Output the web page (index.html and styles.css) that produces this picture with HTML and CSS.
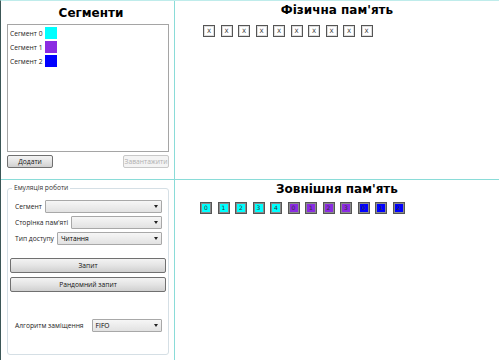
FILE: index.html
```html
<!DOCTYPE html>
<html lang="uk">
<head>
    <meta charset="UTF-8">
    <title>Сегментно-сторінкова пам'ять</title>
    <link rel="stylesheet" href="styles.css">
</head>
<body>
    <div class="window">
        <div class="cell segments">
            <h2 class="title">Сегменти</h2>
            <div class="listbox">
                <div class="seg-item"><span>Сегмент 0</span><i class="swatch cyan"></i></div>
                <div class="seg-item"><span>Сегмент 1</span><i class="swatch violet"></i></div>
                <div class="seg-item"><span>Сегмент 2</span><i class="swatch blue"></i></div>
            </div>
            <div class="seg-buttons">
                <button class="btn small">Додати</button>
                <button class="btn small" disabled>Завантажити</button>
            </div>
        </div>

        <div class="cell physical">
            <h2 class="title">Фізична пам'ять</h2>
            <div class="frames top-frames">
                <div class="frame">X</div>
                <div class="frame">X</div>
                <div class="frame">X</div>
                <div class="frame">X</div>
                <div class="frame">X</div>
                <div class="frame">X</div>
                <div class="frame">X</div>
                <div class="frame">X</div>
                <div class="frame">X</div>
                <div class="frame">X</div>
            </div>
        </div>

        <div class="cell emulation">
            <fieldset class="group">
                <legend>Емуляція роботи</legend>
                <div class="field"><label>Сегмент</label><div class="combo"></div></div>
                <div class="field"><label>Сторінка пам'яті</label><div class="combo"></div></div>
                <div class="field"><label>Тип доступу</label><div class="combo">Читання</div></div>
                <div class="actions">
                    <button class="btn wide">Запит</button>
                    <button class="btn wide">Рандомний запит</button>
                </div>
                <div class="field algo"><label>Алгоритм заміщення</label><div class="combo">FIFO</div></div>
            </fieldset>
        </div>

        <div class="cell external">
            <h2 class="title">Зовнішня пам'ять</h2>
            <div class="frames bottom-frames">
                <div class="frame cyan">0</div>
                <div class="frame cyan">1</div>
                <div class="frame cyan">2</div>
                <div class="frame cyan">3</div>
                <div class="frame cyan">4</div>
                <div class="frame violet">0</div>
                <div class="frame violet">1</div>
                <div class="frame violet">2</div>
                <div class="frame violet">3</div>
                <div class="frame blue">0</div>
                <div class="frame blue">1</div>
                <div class="frame blue">2</div>
            </div>
        </div>
    </div>
</body>
</html>
```

FILE: styles.css
```css
body {
    margin: 0;
    background: white;
    font-family: "Open Sans", "Noto Sans", sans-serif;
    font-size: 6.7px;
    color: #222;
}
.window {
    display: grid;
    grid-template-columns: 173px 1fr;
    grid-template-rows: 178px 1fr;
    gap: 1px;
    height: 359px;
    background: #8adcd8;
    border-left: 1px solid #3c5656;
    border-top: 1px solid #bfeceb;
}
.cell {
    background: white;
    min-width: 0;
}
.title {
    margin: 0;
    font-family: "DejaVu Sans", Verdana, sans-serif;
    font-weight: bold;
    font-size: 12px;
    color: #000;
    text-align: center;
    line-height: 18px;
}

/* segments */
.segments {
    padding: 3px 5px 0 6px;
}
.segments .title {
    padding-left: 6px;
}
.listbox {
    height: 124px;
    margin-top: 2px;
    border: 1px solid #a5a5a5;
    padding: 1px 2px;
}
.seg-item {
    display: flex;
    align-items: center;
    gap: 3px;
    height: 14px;
}
.swatch {
    width: 12px;
    height: 12px;
}
.cyan { background: #00ffff; }
.violet { background: #8a2be2; }
.blue { background: #0000ff; }

.seg-buttons {
    display: flex;
    justify-content: space-between;
    margin-top: 3px;
}
.btn {
    font-family: inherit;
    font-size: 6.7px;
    color: #111;
    height: 13px;
    padding: 0;
    border: 1px solid #707070;
    border-radius: 2px;
    background: linear-gradient(#f3f3f3, #e4e4e4 50%, #d0d0d0);
    line-height: 11px;
}
.btn.small {
    width: 46px;
}
.btn:disabled {
    color: #b0b0b0;
    border-color: #c8c8c8;
    background: #f4f4f4;
}

/* emulation */
.emulation {
    padding: 3px 5px 0 6px;
}
.group {
    margin: 0;
    height: 172px;
    border: 1px solid #d5dfe5;
    border-radius: 3px;
    padding: 0 6px 0 6px;
    box-sizing: border-box;
}
.group legend {
    padding: 0 2px;
    margin-left: -2px;
    color: #333;
    line-height: 10px;
}
.field {
    display: flex;
    align-items: center;
    gap: 2px;
    height: 13px;
    margin-top: 3px;
    padding-left: 1px;
}
.field:first-of-type {
    margin-top: 7px;
}
.field label {
    white-space: nowrap;
    margin-right: 1px;
}
.combo {
    flex: 1;
    position: relative;
    height: 11px;
    border: 1px solid #a8a8a8;
    border-radius: 1px;
    background: linear-gradient(#f6f6f6, #e2e2e2);
    padding-left: 3px;
    line-height: 11px;
    color: #000;
}
.combo::after {
    content: "";
    position: absolute;
    right: 3px;
    top: 4px;
    border-left: 2px solid transparent;
    border-right: 2px solid transparent;
    border-top: 3px solid #222;
}
.actions {
    display: flex;
    flex-direction: column;
    gap: 4px;
    margin: 13px -4px 0 -4px;
}
.btn.wide {
    width: 100%;
    height: 15px;
}
.algo {
    margin-top: 27px;
}
.algo label {
    margin-right: 6px;
}

/* memory */
.frames {
    display: flex;
    gap: 5.5px;
}
.top-frames {
    margin: 6px 0 0 28px;
}
.bottom-frames {
    margin: 4px 0 0 25px;
}
.frame {
    width: 10px;
    height: 10px;
    border: 1px solid #555;
    box-shadow: inset 0 0 0 1px #ddd;
    background: white;
    font-family: "DejaVu Sans", sans-serif;
    font-size: 6px;
    line-height: 10px;
    text-align: center;
    color: #333;
}
.frame.cyan { background: #00ffff; box-shadow: inset 0 0 0 1px #8a8a8a; }
.frame.violet { background: #8a2be2; box-shadow: inset 0 0 0 1px #8a8a8a; }
.frame.blue { background: #0000ff; box-shadow: inset 0 0 0 1px #8a8a8a; }
```
